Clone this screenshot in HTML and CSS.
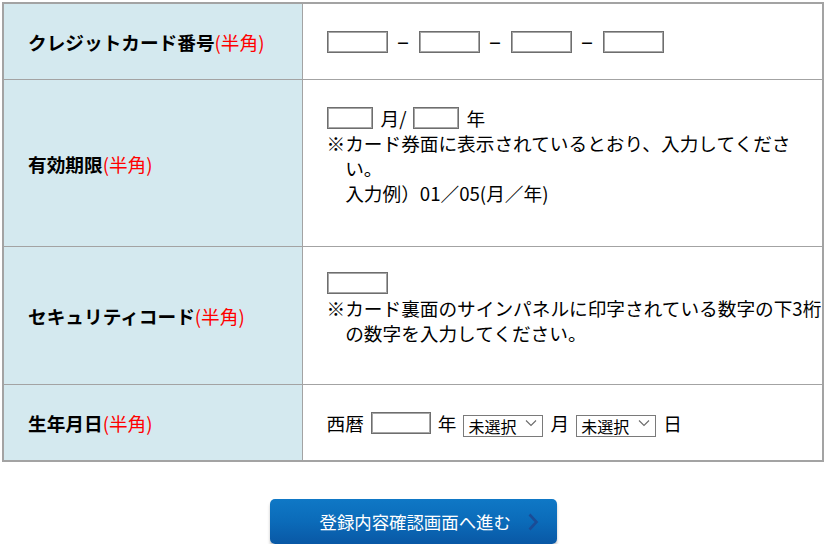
FILE: index.html
```html
<!DOCTYPE html>
<html lang="ja">
<head>
<meta charset="utf-8">
<link rel="stylesheet" href="styles.css">
</head>
<body>
<div class="page">
  <table class="form">
    <tr>
      <th class="label"><span class="lbl">クレジットカード番号</span><span class="req">(半角)</span></th>
      <td class="field r1">
        <div class="line">
          <input class="box w61" type="text"><span class="dash">－</span><input class="box w61" type="text"><span class="dash">－</span><input class="box w61" type="text"><span class="dash">－</span><input class="box w61" type="text">
        </div>
      </td>
    </tr>
    <tr>
      <th class="label"><span class="lbl">有効期限</span><span class="req">(半角)</span></th>
      <td class="field r2">
        <div class="line">
          <input class="box w46" type="text"><span class="txt">月/</span><input class="box w46" type="text"><span class="txt">年</span>
        </div>
        <p class="note">※カード券面に表示されているとおり、入力してください。<br>入力例）01／05(月／年)</p>
      </td>
    </tr>
    <tr>
      <th class="label"><span class="lbl">セキュリティコード</span><span class="req">(半角)</span></th>
      <td class="field r3">
        <div class="line">
          <input class="box w61" type="text">
        </div>
        <p class="note">※カード裏面のサインパネルに印字されている数字の下3桁の数字を入力してください。</p>
      </td>
    </tr>
    <tr>
      <th class="label"><span class="lbl">生年月日</span><span class="req">(半角)</span></th>
      <td class="field r4">
        <div class="line birth">
          <span class="txt">西暦</span><input class="box w60" type="text"><span class="txt">年</span>
          <span class="sel"><select><option>未選択</option></select><svg class="chev" width="12" height="8" viewBox="0 0 12 8"><path d="M1 1.5 L6 6.5 L11 1.5" fill="none" stroke="#6a6a6a" stroke-width="1.1"/></svg></span>
          <span class="txt">月</span>
          <span class="sel"><select><option>未選択</option></select><svg class="chev" width="12" height="8" viewBox="0 0 12 8"><path d="M1 1.5 L6 6.5 L11 1.5" fill="none" stroke="#6a6a6a" stroke-width="1.1"/></svg></span>
          <span class="txt">日</span>
        </div>
      </td>
    </tr>
  </table>
  <div class="actions">
    <button class="submit" type="button"><span class="btn-text">登録内容確認画面へ進む</span><svg class="arrow" width="12" height="18" viewBox="0 0 12 18"><path d="M2.5 1.5 L9.5 9 L2.5 16.5" fill="none" stroke="#1a4c96" stroke-width="2.6"/></svg></button>
  </div>
</div>
</body>
</html>
```
FILE: styles.css
```css
* { box-sizing: border-box; }
html, body { margin: 0; padding: 0; background: #fff; }
body {
  font-family: "Noto Sans CJK JP", "Noto Sans", sans-serif;
  font-size: 14pt;
  color: #000;
}
.page { padding: 2px 4px 0 2px; }
.form {
  width: 822px;
  border-collapse: collapse;
  border: 2px solid #a3a3a3;
}
.form th, .form td { border: 1px solid #a3a3a3; }
.label {
  width: 299px;
  background: #d4e9ef;
  text-align: left;
  vertical-align: middle;
  padding: 0 0 0 24px;
  font-weight: bold;
  line-height: 25px;
}
.req { color: #ff0000; font-weight: normal; }
.field {
  vertical-align: middle;
  padding: 25px 0 25px 24px;
  line-height: 25px;
  background: #fff;
}
.field.r3 { padding-top: 23px; padding-bottom: 23px; }
.line {
  display: flex;
  align-items: center;
  height: 25px;
  gap: 7px;
}
.r1 .line { gap: 8px; }
.box {
  height: 22px;
  border: 1px solid #6e6e6e;
  box-shadow: inset 0 0 0 1px #a6a6a6;
  border-radius: 0;
  background: #fff;
  margin: 0;
  padding: 0;
  font: inherit;
}
.w61 { width: 61px; }
.w60 { width: 60px; }
.w46 { width: 46px; }
.dash {
  width: 15px;
  display: inline-flex;
  justify-content: center;
  font-size: 14px;
  font-weight: bold;
  line-height: 1;
}
.txt { white-space: nowrap; }
.r2 .line .txt:first-of-type { margin-left: 1px; }
.note {
  margin: 0 -6px 16px 0;
  padding-left: 1em;
  text-indent: -1em;
  line-height: 25px;
}
.r2 .note { margin-right: 10px; }
.birth { gap: 7px; }
.sel {
  position: relative;
  display: inline-block;
  width: 80px;
  height: 22px;
}
.sel select {
  appearance: none;
  -webkit-appearance: none;
  width: 80px;
  height: 22px;
  border: 1px solid #7a7a7a;
  border-radius: 0;
  background: #fff;
  padding: 0 4px;
  margin: 0;
  font-family: "Noto Sans CJK JP", sans-serif;
  font-size: 16px;
  line-height: 18px;
  color: #000;
}
.chev {
  position: absolute;
  right: 6px;
  top: 7px;
  pointer-events: none;
}
.actions {
  display: flex;
  justify-content: center;
  padding-top: 37px;
}
.submit {
  width: 287px;
  height: 45px;
  border: none;
  border-radius: 5px;
  background: linear-gradient(to bottom, #0f78c6 0%, #0b6bb9 50%, #0958a5 100%);
  box-shadow: 0 3px 3px rgba(0, 0, 0, 0.25);
  display: flex;
  align-items: center;
  justify-content: flex-start;
  gap: 16px;
  padding: 0 0 0 50px;
  color: #fff;
  font-family: "Noto Sans CJK JP", sans-serif;
  font-size: 17.4px;
  cursor: pointer;
}
.arrow { display: block; }
```
